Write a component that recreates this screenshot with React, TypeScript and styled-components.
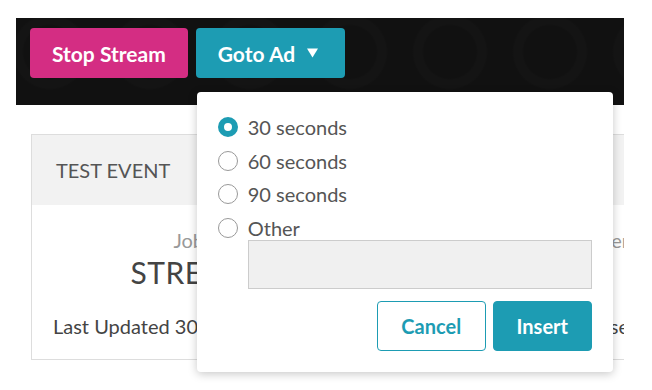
import * as React from 'react';
import styled, { createGlobalStyle } from 'styled-components';

const teal = '#1d9cb3';
const pink = '#d42d83';

const GlobalStyle = createGlobalStyle`
  html, body {
    margin: 0;
    padding: 0;
    background: #fff;
    font-family: Lato, 'Open Sans', sans-serif;
  }
`;

const ad_durations = ['30 seconds', '60 seconds', '90 seconds', 'Other'];

const App: React.FC = () => {
  const [duration, setDuration] = React.useState('30 seconds');

  return (
    <>
      <GlobalStyle />
      <Page>
        <Toolbar>
          <ActionButton $color={pink}>Stop Stream</ActionButton>
          <MenuAnchor>
            <ActionButton $color={teal} $padRight={27}>
              Goto Ad
              <Caret viewBox="0 0 11 10" aria-hidden>
                <path d="M0 0.5 H11 L5.5 9.5 Z" fill="currentColor" />
              </Caret>
            </ActionButton>

            <Popover>
              <RadioList>
                {ad_durations.map((label) => (
                  <RadioRow key={label} onClick={() => setDuration(label)}>
                    <RadioDot $checked={duration === label} />
                    {label}
                  </RadioRow>
                ))}
              </RadioList>
              <OtherInput />
              <PopoverActions>
                <OutlineButton>Cancel</OutlineButton>
                <SolidButton>Insert</SolidButton>
              </PopoverActions>
            </Popover>
          </MenuAnchor>
        </Toolbar>

        <EventCard>
          <CardHeader>TEST EVENT</CardHeader>
          <CardBody>
            <Stats>
              <Stat>
                <StatLabel>Job Status</StatLabel>
                <StatValue>STREAMING</StatValue>
              </Stat>
              <Stat $align="right">
                <StatLabel>Stream Server</StatLabel>
                <StatValue>–</StatValue>
              </Stat>
            </Stats>
            <CardFooter>
              <span>Last Updated 30 seconds ago</span>
              <span>Close</span>
            </CardFooter>
          </CardBody>
        </EventCard>
      </Page>
    </>
  );
};

const Page = styled.div`
  width: 608px;
  margin-left: 16px;
  padding-top: 18px;
  height: 372px;
  overflow: hidden;
  position: relative;
`;

const Toolbar = styled.div`
  height: 87px;
  box-sizing: border-box;
  padding: 10px 14px;
  display: flex;
  align-items: flex-start;
  gap: 8px;
  background-color: #111;
  background-image:
    radial-gradient(circle, transparent 26px, rgba(255, 255, 255, 0.012) 28px, rgba(255, 255, 255, 0.012) 36px, transparent 38px);
  background-size: 100px 96px;
  background-position: -16px -14px;
`;

const MenuAnchor = styled.div`
  position: relative;
`;

const ActionButton = styled.button<{ $color: string; $padRight?: number }>`
  height: 50px;
  padding: 0 ${(p) => p.$padRight ?? 22}px 0 22px;
  border: none;
  border-radius: 4px;
  background: ${(p) => p.$color};
  color: #fff;
  font-family: Lato, sans-serif;
  font-weight: 700;
  font-size: 21px;
  display: flex;
  align-items: center;
  cursor: pointer;
`;

const Caret = styled.svg`
  width: 11px;
  height: 10px;
  margin-left: 12px;
`;

const Popover = styled.div`
  position: absolute;
  z-index: 2;
  top: 64px;
  left: 1px;
  width: 416px;
  box-sizing: border-box;
  padding: 23px 21px 21px;
  background: #fff;
  border-radius: 4px;
  box-shadow: 0 2px 10px rgba(0, 0, 0, 0.22);
  display: flex;
  flex-direction: column;
`;

const RadioList = styled.div`
  display: flex;
  flex-direction: column;
  gap: 9.5px;
`;

const RadioRow = styled.label`
  display: flex;
  align-items: center;
  gap: 10px;
  height: 24px;
  font-size: 20px;
  color: #555;
  cursor: pointer;
`;

const RadioDot = styled.span<{ $checked: boolean }>`
  width: 20px;
  height: 20px;
  box-sizing: border-box;
  border-radius: 50%;
  border: ${(p) => (p.$checked ? `6px solid ${teal}` : '1px solid #999')};
  background: #fff;
  flex-shrink: 0;
`;

const OtherInput = styled.input`
  margin: 0 0 12px 30px;
  height: 49px;
  box-sizing: border-box;
  border: 1px solid #ccc;
  background: #f0f0f0;
  border-radius: 0;
  font-family: Lato, sans-serif;
  font-size: 18px;
  outline: none;
`;

const PopoverActions = styled.div`
  display: flex;
  justify-content: flex-end;
  gap: 7px;
`;

const OutlineButton = styled.button`
  height: 50px;
  width: 109px;
  border: 1.5px solid ${teal};
  border-radius: 4px;
  background: #fff;
  color: ${teal};
  font-family: Lato, sans-serif;
  font-weight: 700;
  font-size: 20px;
`;

const SolidButton = styled(OutlineButton)`
  width: 99px;
  background: ${teal};
  color: #fff;
`;

const EventCard = styled.div`
  margin: 29px 0 0 15px;
  width: 623px;
  border: 1px solid #ddd;
  box-sizing: border-box;
`;

const CardHeader = styled.div`
  height: 70px;
  padding-left: 24px;
  display: flex;
  align-items: center;
  background: #f2f2f2;
  font-size: 20px;
  color: #555;
`;

const CardBody = styled.div`
  padding: 22px 21px 20px;
  background: #fff;
`;

const Stats = styled.div`
  display: grid;
  grid-template-columns: 331px 1fr;
  padding-right: 3px;
`;

const Stat = styled.div<{ $align?: 'right' }>`
  display: flex;
  flex-direction: column;
  align-items: center;
  justify-self: ${(p) => (p.$align === 'right' ? 'end' : 'stretch')};
`;

const StatLabel = styled.div`
  font-size: 20px;
  line-height: 26px;
  color: #999;
`;

const StatValue = styled.div`
  font-size: 30px;
  line-height: 38px;
  color: #444;
  letter-spacing: 0.5px;
`;

const CardFooter = styled.div`
  margin-top: 22px;
  display: flex;
  justify-content: space-between;
  padding-right: 3px;
  font-size: 20px;
  line-height: 26px;
  color: #444;
`;

export default App;
